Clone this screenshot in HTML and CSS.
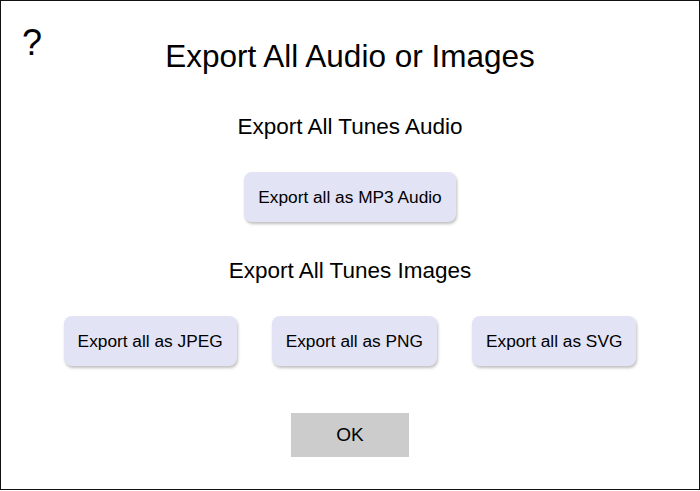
FILE: index.html
```html
<!DOCTYPE html>
<html>
<head>
<meta charset="utf-8">
<link rel="stylesheet" href="styles.css">
</head>
<body>
<div class="dialog">
  <div class="help">?</div>
  <h1 class="title">Export All Audio or Images</h1>
  <h2 class="section">Export All Tunes Audio</h2>
  <div class="row row-audio">
    <button class="btn">Export all as MP3 Audio</button>
  </div>
  <h2 class="section section-images">Export All Tunes Images</h2>
  <div class="row row-images">
    <button class="btn">Export all as JPEG</button>
    <button class="btn">Export all as PNG</button>
    <button class="btn">Export all as SVG</button>
  </div>
  <div class="row row-ok">
    <button class="ok">OK</button>
  </div>
</div>
</body>
</html>
```
FILE: styles.css
```css
html, body {
  margin: 0;
  padding: 0;
  background: #ffffff;
}
body {
  font-family: "Liberation Sans", Arial, Helvetica, sans-serif;
  color: #000;
}
.dialog {
  position: relative;
  box-sizing: border-box;
  width: 700px;
  height: 490px;
  border: 1px solid #111;
  display: flex;
  flex-direction: column;
  align-items: center;
  padding-top: 37px;
}
.help {
  position: absolute;
  left: 21px;
  top: 21px;
  font-size: 36px;
  line-height: 42px;
}
.title {
  margin: 0;
  font-weight: normal;
  font-size: 31.5px;
  line-height: 36px;
}
.section {
  margin: 40px 0 0 0;
  font-weight: normal;
  font-size: 22.5px;
  line-height: 26px;
}
.section-images {
  margin-top: 36px;
}
.row {
  display: flex;
  justify-content: center;
  gap: 35px;
}
.row-audio {
  margin-top: 32px;
}
.row-images {
  margin-top: 32px;
}
.row-ok {
  margin-top: 47px;
}
.btn {
  font-family: "Liberation Sans", Arial, Helvetica, sans-serif;
  font-size: 17.3px;
  line-height: 20px;
  color: #000;
  background: #e3e3f6;
  border: none;
  border-radius: 8px;
  padding: 15px 14px;
  box-shadow: 1px 2px 3px rgba(0, 0, 0, 0.25);
}
.ok {
  font-family: "Liberation Sans", Arial, Helvetica, sans-serif;
  font-size: 19px;
  line-height: 22px;
  color: #000;
  background: #cccccc;
  border: none;
  border-radius: 0;
  width: 118px;
  height: 44px;
  padding: 0;
}
```
